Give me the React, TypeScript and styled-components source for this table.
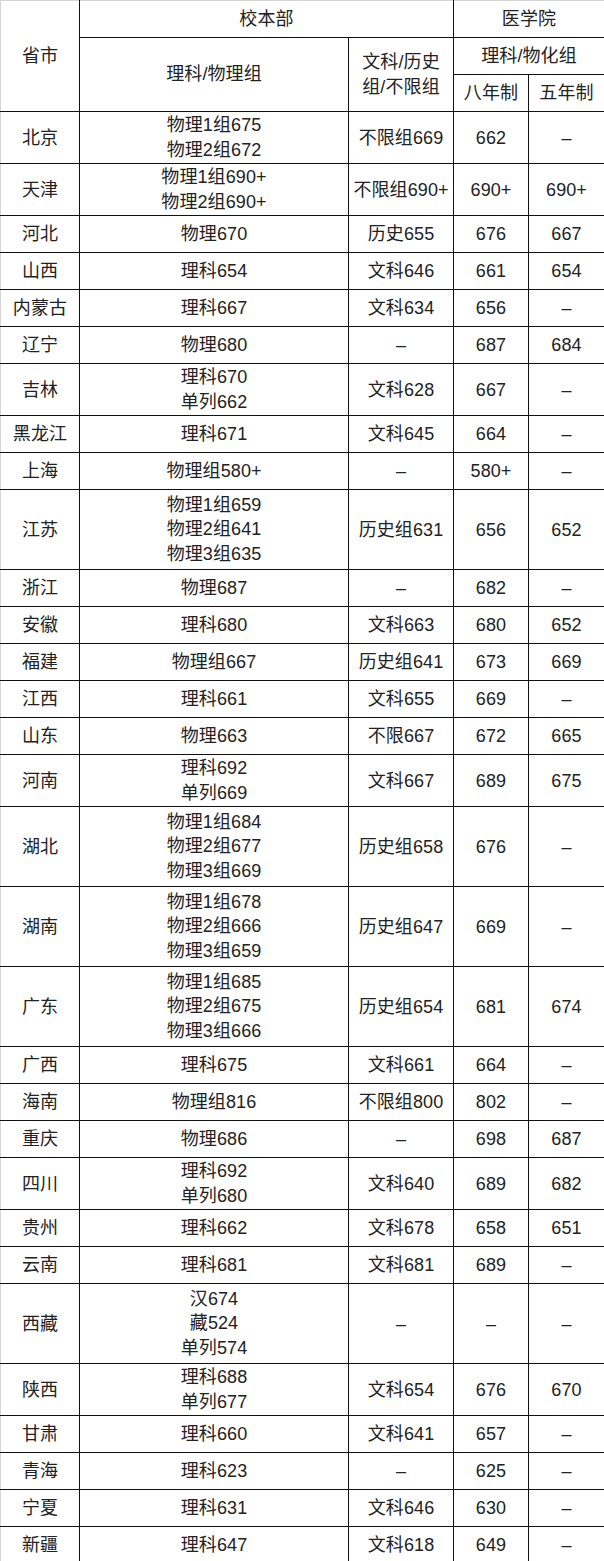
import { FC } from 'react';
import styled, { createGlobalStyle } from 'styled-components';

interface ScoreRow {
  province: string;
  main: string[];
  arts: string;
  eight: string;
  five: string;
}

const DASH = '–';

const rows: ScoreRow[] = [
  { province: '北京', main: ['物理1组675', '物理2组672'], arts: '不限组669', eight: '662', five: DASH },
  { province: '天津', main: ['物理1组690+', '物理2组690+'], arts: '不限组690+', eight: '690+', five: '690+' },
  { province: '河北', main: ['物理670'], arts: '历史655', eight: '676', five: '667' },
  { province: '山西', main: ['理科654'], arts: '文科646', eight: '661', five: '654' },
  { province: '内蒙古', main: ['理科667'], arts: '文科634', eight: '656', five: DASH },
  { province: '辽宁', main: ['物理680'], arts: DASH, eight: '687', five: '684' },
  { province: '吉林', main: ['理科670', '单列662'], arts: '文科628', eight: '667', five: DASH },
  { province: '黑龙江', main: ['理科671'], arts: '文科645', eight: '664', five: DASH },
  { province: '上海', main: ['物理组580+'], arts: DASH, eight: '580+', five: DASH },
  { province: '江苏', main: ['物理1组659', '物理2组641', '物理3组635'], arts: '历史组631', eight: '656', five: '652' },
  { province: '浙江', main: ['物理687'], arts: DASH, eight: '682', five: DASH },
  { province: '安徽', main: ['理科680'], arts: '文科663', eight: '680', five: '652' },
  { province: '福建', main: ['物理组667'], arts: '历史组641', eight: '673', five: '669' },
  { province: '江西', main: ['理科661'], arts: '文科655', eight: '669', five: DASH },
  { province: '山东', main: ['物理663'], arts: '不限667', eight: '672', five: '665' },
  { province: '河南', main: ['理科692', '单列669'], arts: '文科667', eight: '689', five: '675' },
  { province: '湖北', main: ['物理1组684', '物理2组677', '物理3组669'], arts: '历史组658', eight: '676', five: DASH },
  { province: '湖南', main: ['物理1组678', '物理2组666', '物理3组659'], arts: '历史组647', eight: '669', five: DASH },
  { province: '广东', main: ['物理1组685', '物理2组675', '物理3组666'], arts: '历史组654', eight: '681', five: '674' },
  { province: '广西', main: ['理科675'], arts: '文科661', eight: '664', five: DASH },
  { province: '海南', main: ['物理组816'], arts: '不限组800', eight: '802', five: DASH },
  { province: '重庆', main: ['物理686'], arts: DASH, eight: '698', five: '687' },
  { province: '四川', main: ['理科692', '单列680'], arts: '文科640', eight: '689', five: '682' },
  { province: '贵州', main: ['理科662'], arts: '文科678', eight: '658', five: '651' },
  { province: '云南', main: ['理科681'], arts: '文科681', eight: '689', five: DASH },
  { province: '西藏', main: ['汉674', '藏524', '单列574'], arts: DASH, eight: DASH, five: DASH },
  { province: '陕西', main: ['理科688', '单列677'], arts: '文科654', eight: '676', five: '670' },
  { province: '甘肃', main: ['理科660'], arts: '文科641', eight: '657', five: DASH },
  { province: '青海', main: ['理科623'], arts: DASH, eight: '625', five: DASH },
  { province: '宁夏', main: ['理科631'], arts: '文科646', eight: '630', five: DASH },
  { province: '新疆', main: ['理科647'], arts: '文科618', eight: '649', five: DASH },
];

const rowHeights: Record<number, number> = { 1: 37, 2: 52, 3: 80 };

const App: FC = () => (
  <>
    <GlobalStyle />
    <Sheet>
      <colgroup>
        <col style={{ width: 79 }} />
        <col style={{ width: 269 }} />
        <col style={{ width: 105 }} />
        <col style={{ width: 75 }} />
        <col style={{ width: 76 }} />
      </colgroup>
      <thead>
        <HeadRow>
          <HeadCell rowSpan={3} $first>省市</HeadCell>
          <HeadCell colSpan={2} $top>校本部</HeadCell>
          <HeadCell colSpan={2} $top>医学院</HeadCell>
        </HeadRow>
        <HeadRow>
          <HeadCell rowSpan={2}>理科/物理组</HeadCell>
          <HeadCell rowSpan={2}>文科/历史<br />组/不限组</HeadCell>
          <HeadCell colSpan={2}>理科/物化组</HeadCell>
        </HeadRow>
        <HeadRow>
          <HeadCell>八年制</HeadCell>
          <HeadCell>五年制</HeadCell>
        </HeadRow>
      </thead>
      <tbody>
        { rows.map(row => (
          <Row key={ row.province } $lines={ row.main.length }>
            <Cell $first>{ row.province }</Cell>
            <Cell>
              { row.main.map(line => <Line key={ line }>{ line }</Line>) }
            </Cell>
            <Cell>{ row.arts }</Cell>
            <Cell>{ row.eight }</Cell>
            <Cell>{ row.five }</Cell>
          </Row>
        )) }
      </tbody>
    </Sheet>
  </>
);

const GlobalStyle = createGlobalStyle`
  html, body {
    margin: 0;
    padding: 0;
    background: #ffffff;
  }

  body {
    font-family: "Liberation Sans", "Noto Sans CJK SC", sans-serif;
    color: #222222;
  }
`;

const Sheet = styled.table`
  width: 604px;
  table-layout: fixed;
  border-collapse: collapse;
  font-size: 18px;
  letter-spacing: 0.1px;
`;

const HeadRow = styled.tr`
  height: 37px;
`;

interface EdgeProps {
  $first?: boolean;
  $top?: boolean;
}

const HeadCell = styled.th<EdgeProps>`
  padding: 0 1px;
  font-weight: normal;
  line-height: 25px;
  text-align: center;
  vertical-align: middle;
  border: 1px solid #111;
  ${ props => props.$first && 'border-left-color: #d4d4d4; border-top-color: #d4d4d4;' }
  ${ props => props.$top && 'border-top-color: #d4d4d4;' }
`;

const Row = styled.tr<{ $lines: number }>`
  height: ${ props => rowHeights[props.$lines] }px;
`;

const Cell = styled.td<EdgeProps>`
  padding: 0 1px;
  line-height: 24px;
  text-align: center;
  vertical-align: middle;
  white-space: nowrap;
  border: 1px solid #111;
  ${ props => props.$first && 'border-left-color: #d4d4d4;' }
`;

const Line = styled.div`
  line-height: 24.5px;
`;

export default App;
